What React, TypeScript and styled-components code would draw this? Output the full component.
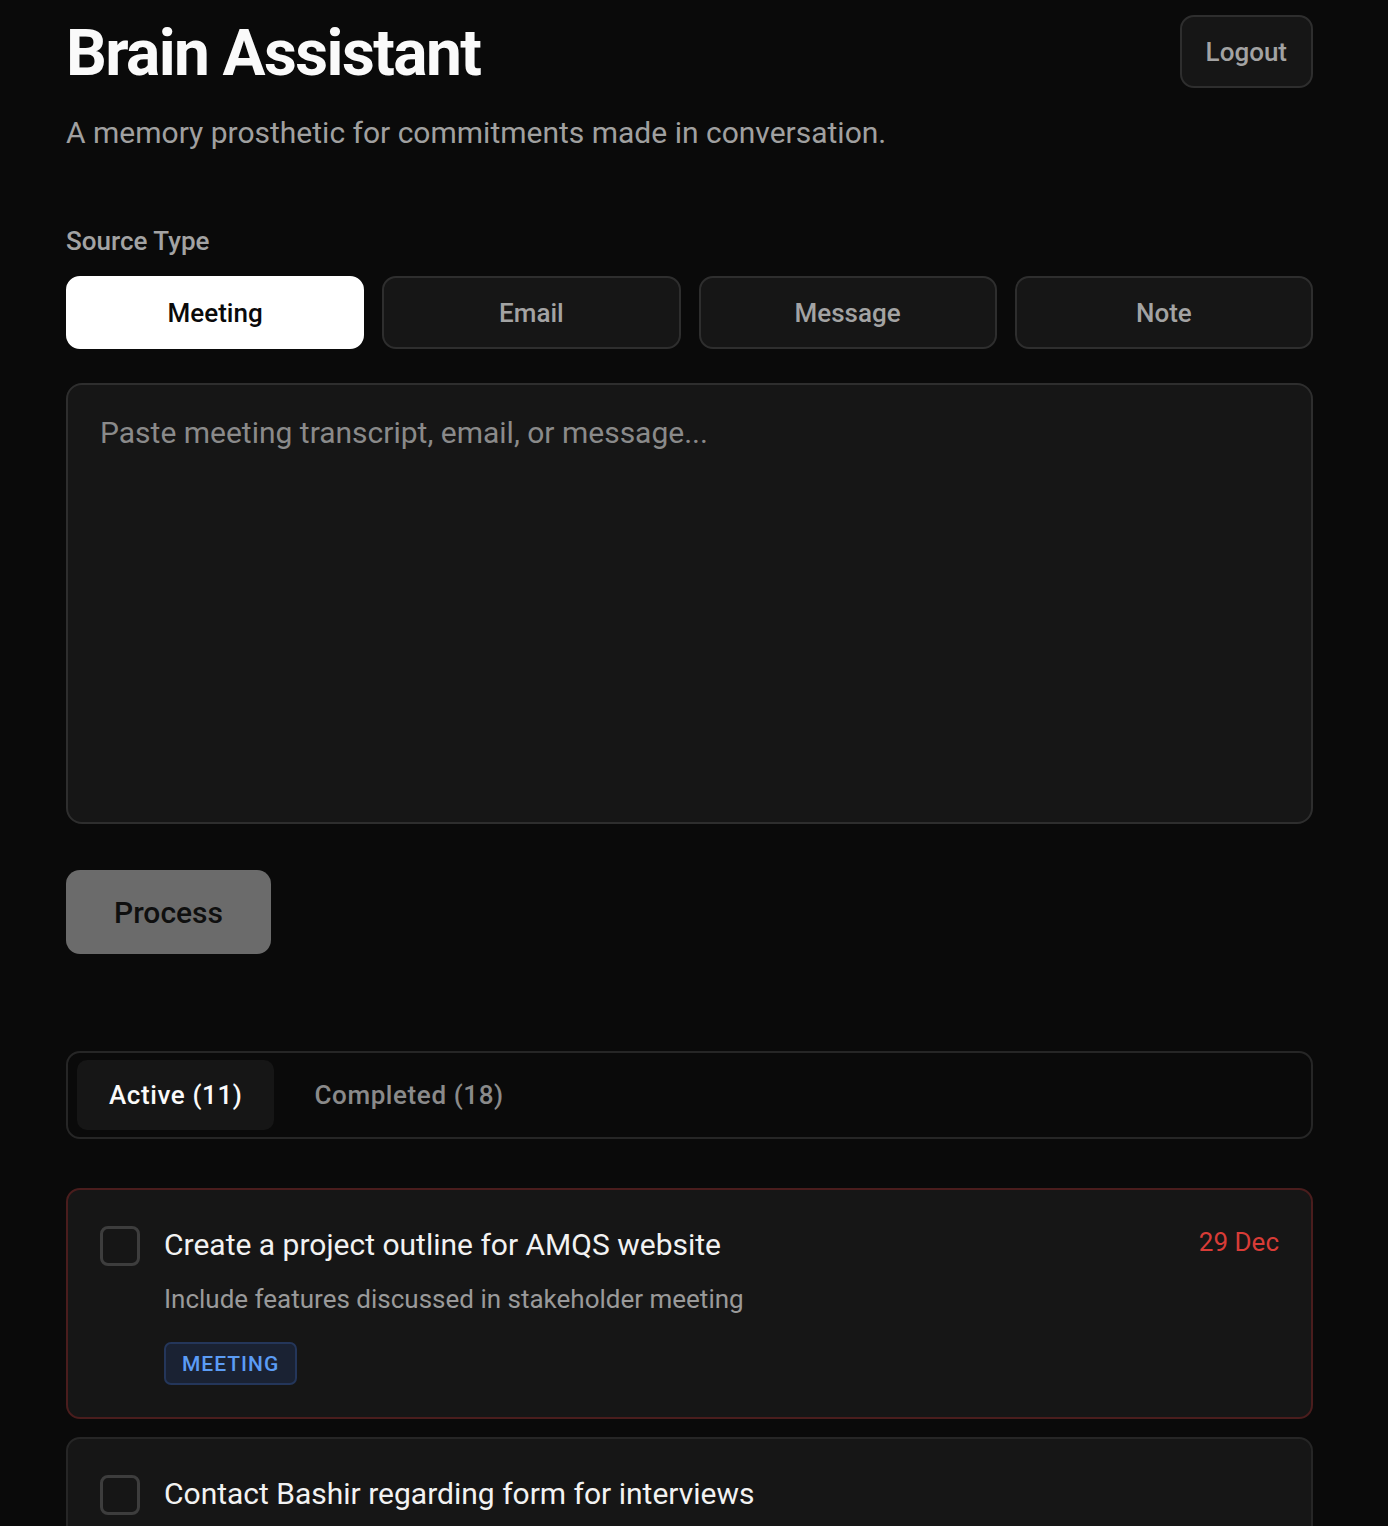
import React from "react";
import styled, { createGlobalStyle } from "styled-components";

const Global = createGlobalStyle`
  html, body { margin: 0; padding: 0; background: #0a0a0a; }
  body { font-family: Roboto, "Noto Sans", "Liberation Sans", sans-serif; color: #fafafa; }
  * { box-sizing: border-box; }
`;

const Page = styled.div`
  padding: 15px 75px 40px 66px;
  width: 1388px;
`;

const Header = styled.header`
  display: flex;
  justify-content: space-between;
  align-items: flex-start;
`;

const TitleBlock = styled.div`
  display: flex;
  flex-direction: column;
`;

const Title = styled.h1`
  margin: 0;
  font-size: 64px;
  font-weight: 700;
  line-height: 78px;
  letter-spacing: -1.6px;
  color: #fafafa;
`;

const Subtitle = styled.p`
  margin: 20px 0 0;
  font-size: 30px;
  line-height: 40px;
  color: #a0a0a0;
  font-weight: 400;
`;

const GhostButton = styled.button`
  height: 73px;
  padding: 0 24px;
  background: #161616;
  border: 2px solid #2e2e2e;
  border-radius: 14px;
  color: #a3a3a3;
  font-family: inherit;
  font-size: 26px;
  font-weight: 500;
`;

const Label = styled.div`
  margin-top: 72px;
  font-size: 26px;
  font-weight: 500;
  color: #a3a3a3;
  line-height: 32px;
`;

const SourceRow = styled.div`
  margin-top: 19px;
  display: grid;
  grid-template-columns: repeat(4, 1fr);
  gap: 18px;
`;

const SourceButton = styled.button<{ $active?: boolean }>`
  height: 73px;
  border-radius: 14px;
  font-family: inherit;
  font-size: 26px;
  font-weight: 500;
  background: ${(p) => (p.$active ? "#ffffff" : "#161616")};
  color: ${(p) => (p.$active ? "#0a0a0a" : "#a3a3a3")};
  border: 2px solid ${(p) => (p.$active ? "#ffffff" : "#2e2e2e")};
`;

const TextArea = styled.textarea`
  display: block;
  margin-top: 34px;
  width: 100%;
  height: 441px;
  resize: none;
  background: #161616;
  border: 2px solid #2e2e2e;
  border-radius: 16px;
  padding: 28px 32px;
  font-family: inherit;
  font-size: 30px;
  line-height: 40px;
  color: #fafafa;
  outline: none;
  &::placeholder { color: #8a8a8a; }
`;

const ProcessButton = styled.button`
  margin-top: 46px;
  height: 84px;
  width: 205px;
  background: #6b6b6b;
  border: none;
  border-radius: 14px;
  font-family: inherit;
  font-size: 30px;
  font-weight: 500;
  color: #0f0f0f;
`;

const Tabs = styled.div`
  margin-top: 97px;
  display: flex;
  align-items: center;
  height: 88px;
  padding: 8px 9px;
  border: 2px solid #262626;
  border-radius: 14px;
  background: #0a0a0a;
`;

const Tab = styled.div<{ $active?: boolean }>`
  height: 70px;
  display: flex;
  align-items: center;
  padding: 0 32px;
  border-radius: 10px;
  font-size: 26px;
  font-weight: 500;
  letter-spacing: 0.6px;
  background: ${(p) => (p.$active ? "#161616" : "transparent")};
  color: ${(p) => (p.$active ? "#fafafa" : "#8a8a8a")};
  margin-right: ${(p) => (p.$active ? "8px" : "0")};
`;

const List = styled.div`
  margin-top: 49px;
  display: flex;
  flex-direction: column;
  gap: 18px;
`;

const Card = styled.div<{ $overdue?: boolean }>`
  background: #161616;
  border: 2px solid ${(p) => (p.$overdue ? "#4a1d1d" : "#262626")};
  border-radius: 14px;
  padding: 35px 32px 32px 32px;
  display: flex;
  align-items: flex-start;
  gap: 24px;
`;

const Checkbox = styled.div`
  flex: none;
  width: 40px;
  height: 40px;
  border: 3px solid #3d3d3d;
  border-radius: 8px;
  margin-top: 1px;
`;

const Body = styled.div`
  flex: 1;
  display: flex;
  flex-direction: column;
  align-items: flex-start;
`;

const TaskTitle = styled.div`
  font-size: 30px;
  line-height: 40px;
  color: #f2f2f2;
`;

const TaskDesc = styled.div`
  margin-top: 17px;
  font-size: 26px;
  line-height: 34px;
  color: #9a9a9a;
`;

const Badge = styled.span`
  margin-top: 26px;
  height: 43px;
  display: inline-flex;
  align-items: center;
  padding: 0 16px;
  background: #1a2233;
  border: 2px solid #24365a;
  border-radius: 7px;
  color: #5b9cf5;
  font-size: 21px;
  font-weight: 500;
  letter-spacing: 1px;
`;

const DueDate = styled.div`
  flex: none;
  font-size: 26px;
  line-height: 34px;
  color: #d93c37;
  font-weight: 400;
`;

export default function App() {
  return (
    <>
      <Global />
      <Page>
        <Header>
          <TitleBlock>
            <Title>Brain Assistant</Title>
            <Subtitle>A memory prosthetic for commitments made in conversation.</Subtitle>
          </TitleBlock>
          <GhostButton>Logout</GhostButton>
        </Header>
        <Label>Source Type</Label>
        <SourceRow>
          <SourceButton $active>Meeting</SourceButton>
          <SourceButton>Email</SourceButton>
          <SourceButton>Message</SourceButton>
          <SourceButton>Note</SourceButton>
        </SourceRow>
        <TextArea placeholder="Paste meeting transcript, email, or message..." />
        <ProcessButton>Process</ProcessButton>
        <Tabs>
          <Tab $active>Active (11)</Tab>
          <Tab>Completed (18)</Tab>
        </Tabs>
        <List>
          <Card $overdue>
            <Checkbox />
            <Body>
              <TaskTitle>Create a project outline for AMQS website</TaskTitle>
              <TaskDesc>Include features discussed in stakeholder meeting</TaskDesc>
              <Badge>MEETING</Badge>
            </Body>
            <DueDate>29 Dec</DueDate>
          </Card>
          <Card>
            <Checkbox />
            <Body>
              <TaskTitle>Contact Bashir regarding form for interviews</TaskTitle>
            </Body>
          </Card>
        </List>
      </Page>
    </>
  );
}
